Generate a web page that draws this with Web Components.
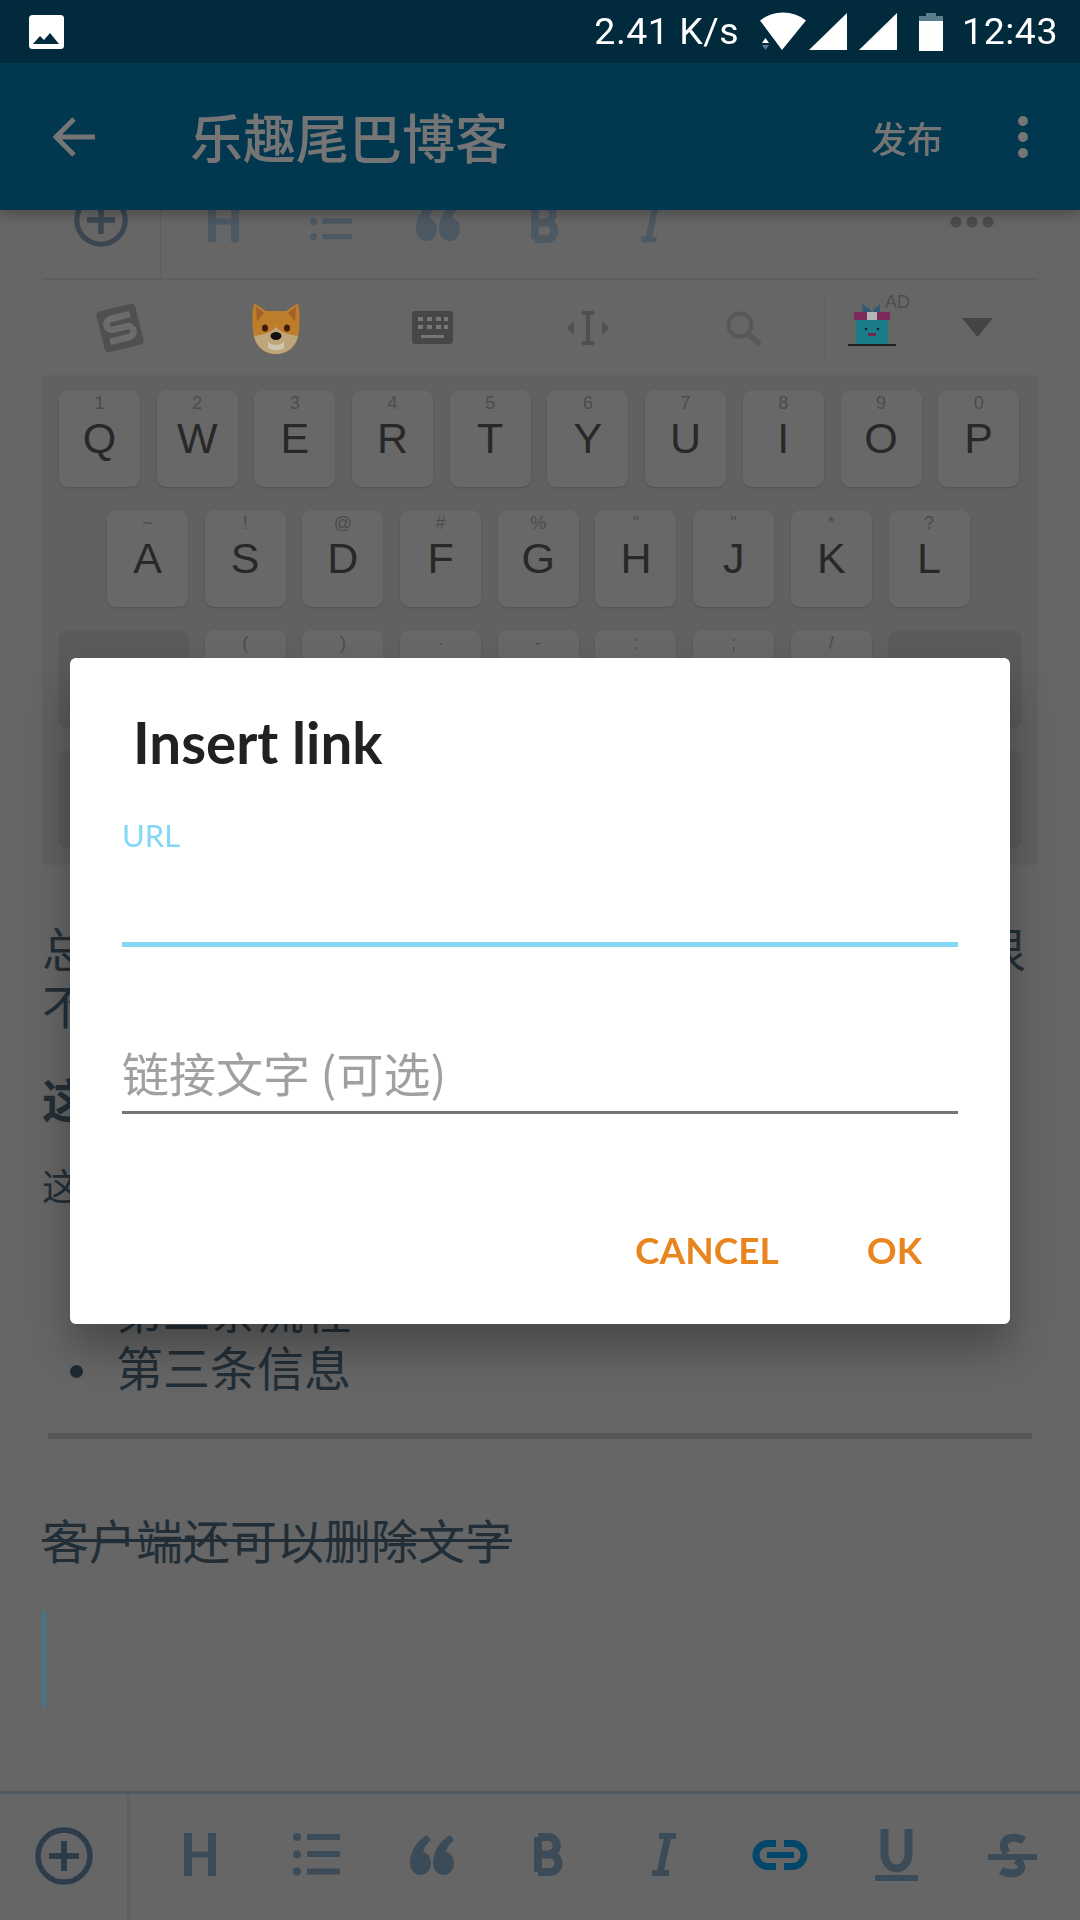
<!DOCTYPE html>
<html lang="zh">
<head>
<meta charset="utf-8">
<title>Insert link</title>
<style>
html,body{margin:0;padding:0;}
body{width:1080px;height:1920px;overflow:hidden;background:#666;font-family:"Noto Sans CJK SC","Noto Sans",sans-serif;}
</style>
</head>
<body>
<blog-screen>
  <status-bar></status-bar>
  <app-bar title-text="乐趣尾巴博客" action="发布"></app-bar>
  <keyboard-shot></keyboard-shot>
  <post-body></post-body>
  <format-bar></format-bar>
  <link-dialog></link-dialog>
</blog-screen>

<script>
// every toolbar / status icon lives here, keyed by name
const ICONS = {
    plus: `<svg viewBox="0 0 58 58"><circle cx="29" cy="29" r="26" fill="none" stroke="currentColor" stroke-width="5.5"/><path d="M14 29H44M29 14V44" stroke="currentColor" stroke-width="6"/></svg>`,
    h: `<svg viewBox="0 0 32 43"><path d="M0 0h8v18.500h16V0h8v43h-8V24.500H8V43H0z" fill="currentColor"/></svg>`,
    list: `<svg viewBox="0 0 47 43"><circle cx="4" cy="4" r="4" fill="currentColor"/><circle cx="4" cy="21.500" r="4" fill="currentColor"/><circle cx="4" cy="38.500" r="4" fill="currentColor"/><path d="M14 1h33v6H14zM14 18h33v6H14zM14 35.500h33v6H14z" fill="currentColor"/></svg>`,
    quote: `<svg viewBox="0 0 44 40"><path d="M17 0L21 5C16 9 14 13 13 17C18 18 21 23 21 28A10.500 12 0 0 1 0 28C0 16 7 6 17 0Z" fill="currentColor"/><path d="M40 0L44 5C39 9 37 13 36 17C41 18 44 23 44 28A10.500 12 0 0 1 23 28C23 16 30 6 40 0Z" fill="currentColor"/></svg>`,
    b: `<svg viewBox="0 0 29 43"><path d="M4 4H14a8.500 8.500 0 0 1 0 17.500H4M14 21.500h2a8.500 8.750 0 0 1 0 17.500H4M4 4V39" fill="none" stroke="currentColor" stroke-width="8"/></svg>`,
    i: `<svg viewBox="0 0 24 43"><path d="M7 3H24M0 40H17" fill="none" stroke="currentColor" stroke-width="6"/><path d="M12.500 3L4.500 40H11.500L19.500 3Z" fill="currentColor"/></svg>`,
    link: `<svg viewBox="0 0 52 30"><path d="M22 3.500H13.500a11.500 11.500 0 0 0 0 23H22M30 3.500h8.500a11.500 11.500 0 0 1 0 23H30" fill="none" stroke="currentColor" stroke-width="7"/><path d="M13 12h27v6H13z" fill="currentColor"/></svg>`,
    u: `<svg viewBox="0 0 43 52"><path d="M9.500 0V25a12 14.500 0 0 0 24 0V0" fill="none" stroke="currentColor" stroke-width="8"/><path d="M0 46h43v6H0z" fill="currentColor"/></svg>`,
    s: `<svg viewBox="0 0 49 42"><path d="M36 6.500C28 2 17 3 16 10C15.500 14 16 16 19 19M28 26C33 29 34 31 33 35C31 40 21 41 13 36.500" fill="none" stroke="currentColor" stroke-width="8"/><path d="M0 20h49v6H0z" fill="currentColor"/></svg>`,
    dots: `<svg viewBox="0 0 44 12"><circle cx="6" cy="6" r="5.500" fill="currentColor"/><circle cx="22" cy="6" r="5.500" fill="currentColor"/><circle cx="38" cy="6" r="5.500" fill="currentColor"/></svg>`,
    back: `<svg viewBox="0 0 42 40"><path d="M42 20H4M21 2L3 20L21 38" fill="none" stroke="currentColor" stroke-width="5"/></svg>`,
    more: `<svg viewBox="0 0 10 42"><circle cx="5" cy="5" r="5" fill="currentColor"/><circle cx="5" cy="21" r="5" fill="currentColor"/><circle cx="5" cy="37" r="5" fill="currentColor"/></svg>`,
    picture: `<svg viewBox="0 0 35 34"><rect width="35" height="34" rx="3.500" fill="#fff"/><path d="M4 29L11 21L15 25L21 18L30 29Z" fill="#012a3d"/></svg>`,
    wifi: `<svg viewBox="0 0 48 38"><path d="M1 7.500A37 37 0 0 1 47 7.500L23 37Z" fill="#fff"/><path d="M3 30H10L6.500 25Z" fill="#fff"/><path d="M3 32H10L6.500 37Z" fill="#5b7c8c"/></svg>`,
    signal: `<svg viewBox="0 0 38 37"><path d="M0 37H38V0Z" fill="#fff"/></svg>`,
    battery: `<svg viewBox="0 0 24 38"><path d="M7 0H17V3H24V8H0V3H7Z" fill="#5b7c8c"/><path d="M0 8H24V38H0Z" fill="#fff"/></svg>`,
    sogou: `<svg viewBox="0 0 52 52"><g transform="rotate(-14 26 26)"><rect x="6" y="5" width="40" height="42" rx="4" fill="#4f4f4f"/><path d="M39 15H19a5.500 5.500 0 0 0 0 11h14a5.500 5.500 0 0 1 0 11H13" fill="none" stroke="#6c6c6c" stroke-width="6.500"/></g></svg>`,
    dog: `<svg viewBox="0 0 48 52"><path d="M2 1L14 9H34L46 1C48 10 48 20 47 27C47 42 36 52 24 52C12 52 1 42 1 27C0 20 0 10 2 1Z" fill="#bd7d2a"/><path d="M4 5L12 11L5 19ZM44 5L36 11L43 19Z" fill="#a0602a"/><path d="M24 25C30 32 41 33 46 34C44 45 35 52 24 52C13 52 4 45 2 34C7 33 18 32 24 25Z" fill="#bfa67a"/><ellipse cx="13" cy="26" rx="3" ry="3.500" fill="#3f1a08"/><ellipse cx="35" cy="26" rx="3" ry="3.500" fill="#3f1a08"/><ellipse cx="24" cy="34" rx="5.500" ry="4" fill="#141110"/><path d="M16 40C20 44 28 44 32 40V46C28 49 20 49 16 46Z" fill="#cfc5ad"/></svg>`,
    keys: `<svg viewBox="0 0 41 33"><rect width="41" height="33" rx="3" fill="#474747"/><path d="M6 6h5v4H6zM15 6h5v4h-5zM24 6h5v4h-5zM32 6h4v4h-4zM6 14h5v4H6zM15 14h5v4h-5zM24 14h5v4h-5zM32 14h4v4h-4zM9 24h23v3H9z" fill="#777"/></svg>`,
    cursor: `<svg viewBox="0 0 42 34"><path d="M15 2h12M15 32h12M21 2V32" fill="none" stroke="#505050" stroke-width="4"/><path d="M0 17L7 10V24ZM42 17L35 10V24Z" fill="#505050"/></svg>`,
    search: `<svg viewBox="0 0 37 34"><circle cx="14" cy="14" r="11.500" fill="none" stroke="#575757" stroke-width="4"/><path d="M22 23L34 33" stroke="#575757" stroke-width="5"/></svg>`,
    gift: `<svg viewBox="0 0 48 46"><path d="M14 4L23 10V13H15ZM32 4L25 10V13H32Z" fill="#2f5a72"/><rect x="8" y="20" width="32" height="24" fill="#1b7d8a"/><rect x="6" y="12" width="36" height="8" fill="#7c2c5a"/><rect x="19" y="12" width="10" height="8" fill="#b5b5b5"/><circle cx="18" cy="29" r="1.300" fill="#123"/><circle cx="30" cy="29" r="1.300" fill="#123"/><path d="M20 33h8v3h-8z" fill="#6d2c4c"/><path d="M0 44h48v2H0z" fill="#222"/></svg>`,
    triangle: `<svg viewBox="0 0 31 19"><path d="M0 0H31L15.500 19Z" fill="#444"/></svg>`,
};

class UiIcon extends HTMLElement {
    constructor() {
        super();
        const shadowRoot = this.attachShadow({ mode: 'open' });
        const w = this.getAttribute('w') || 24;
        const h = this.getAttribute('h') || 24;
        shadowRoot.innerHTML = `
        <style>
        :host{ display:block; flex:none; width:${w}px; height:${h}px; }
        svg{ display:block; width:100%; height:100%; overflow:visible; }
        </style>
        ${ICONS[this.getAttribute('name')] || ''}
        `;
    }
}
customElements.define('ui-icon', UiIcon);

class BlogScreen extends HTMLElement {
    constructor() {
        super();
        this.attachShadow({ mode: 'open' }).innerHTML = `
        <style>
        :host{ display:flex; flex-direction:column; position:relative; width:1080px; height:1920px; overflow:hidden; background:#666; }
        </style>
        <slot></slot>
        `;
    }
}
customElements.define('blog-screen', BlogScreen);

class StatusBar extends HTMLElement {
    constructor() {
        super();
        this.attachShadow({ mode: 'open' }).innerHTML = `
        <style>
        :host{ display:flex; flex:none; align-items:center; height:63px; padding:0 22px 0 29px; background:#012a3d; color:#fff;
               font:37.5px/63px Roboto,sans-serif; position:relative; z-index:3; }
        .speed{ margin-left:auto; letter-spacing:.5px; }
        .time{ margin-left:19px; letter-spacing:.5px; }
        </style>
        <ui-icon name="picture" w="35" h="34"></ui-icon>
        <span class="speed">2.41 K/s</span>
        <ui-icon name="wifi" w="48" h="38" style="margin-left:20px"></ui-icon>
        <ui-icon name="signal" w="38" h="37" style="margin-left:2px"></ui-icon>
        <ui-icon name="signal" w="38" h="37" style="margin-left:12px"></ui-icon>
        <ui-icon name="battery" w="24" h="38" style="margin-left:22px"></ui-icon>
        <span class="time">12:43</span>
        `;
    }
}
customElements.define('status-bar', StatusBar);

class AppBar extends HTMLElement {
    constructor() {
        super();
        this.attachShadow({ mode: 'open' }).innerHTML = `
        <style>
        :host{ display:flex; flex:none; align-items:center; height:147px; padding:0 52px 0 53px; background:#01374f; color:#757575;
               position:relative; z-index:2; box-shadow:0 4px 12px rgba(0,0,0,.28); }
        .title{ margin-left:95px; font:500 53px/1 "Noto Sans CJK SC",sans-serif; }
        .action{ margin-left:auto; font:500 36px/1 "Noto Sans CJK SC",sans-serif; }
        </style>
        <ui-icon name="back" w="42" h="40"></ui-icon>
        <span class="title">${this.getAttribute('title-text')}</span>
        <span class="action">${this.getAttribute('action')}</span>
        <ui-icon name="more" w="10" h="42" style="margin-left:75px"></ui-icon>
        `;
    }
}
customElements.define('app-bar', AppBar);

class SoftKey extends HTMLElement {
    constructor() {
        super();
        const hint = this.getAttribute('hint') || '';
        this.attachShadow({ mode: 'open' }).innerHTML = `
        <style>
        :host{ display:block; flex:none; box-sizing:border-box; width:81px; height:97px; border-radius:9px; background:#686868;
               box-shadow:0 1px 2px rgba(0,0,0,.16); text-align:center; color:#282828; font-family:"Liberation Sans",sans-serif; overflow:hidden; }
        :host([wide]){ width:130px; background:#5b5b5b; }
        .hint{ display:block; height:18px; padding-top:3.5px; font-size:18px; line-height:18px; color:#4c4c4c; }
        .main{ display:block; font-size:43px; line-height:43px; margin-top:5px; }
        </style>
        <span class="hint">${hint}</span>
        <span class="main"><slot></slot></span>
        `;
    }
}
customElements.define('soft-key', SoftKey);

class KeyboardShot extends HTMLElement {
    constructor() {
        super();
        const row = (letters, hints) => letters.map((l, i) => `<soft-key hint="${hints[i]}">${l}</soft-key>`).join('');
        this.attachShadow({ mode: 'open' }).innerHTML = `
        <style>
        :host{ display:block; flex:none; box-sizing:border-box; width:996px; margin-left:42px; height:655px; overflow:hidden; filter:blur(.7px); }
        .tools{ display:flex; align-items:flex-end; box-sizing:border-box; height:70px; padding-bottom:35px; border-bottom:2px solid #5e5e5e; color:#4c5862; position:relative; }
        .tools .add{ width:118px; flex:none; display:flex; justify-content:center; margin-bottom:-4px; color:#3a4752; }
        .tools .cell{ width:107px; flex:none; display:flex; justify-content:center; align-items:flex-end; }
        .tools .sep{ position:absolute; left:118px; top:0; bottom:0; width:1px; background:#5d5d5d; }
        .tools .cells{ display:flex; padding-left:10px; }
        .tools .more{ margin-left:auto; margin-right:44px; margin-bottom:15px; color:#4c4c4c; }
        .cands{ display:flex; align-items:center; height:95px; }
        .cands .cell{ width:156px; flex:none; display:flex; justify-content:center; }
        .cands .sep{ width:1px; height:66px; background:#606060; margin-left:2px; }
        .gift{ position:relative; margin:0 0 9px 23px; }
        .gift span{ position:absolute; left:37px; top:-7px; font:18px/18px "Liberation Sans",sans-serif; color:#4e4e4e; }
        .keys{ background:#616161; height:490px; box-sizing:border-box; padding:15px 17px 0; display:flex; flex-direction:column; gap:23px; }
        .row{ display:flex; gap:16.7px; }
        .row.mid{ padding-left:48px; }
        .row.shifted soft-key[wide]:first-child{ width:129px; }
        .row.shifted soft-key[wide]:last-child{ width:132px; }
        .row.split{ justify-content:space-between; }
        </style>
        <div class="tools">
            <div class="add"><ui-icon name="plus" w="54" h="54"></ui-icon></div>
            <div class="sep"></div>
            <div class="cells">
                <div class="cell"><ui-icon name="h" w="31" h="43"></ui-icon></div>
                <div class="cell"><ui-icon name="list" w="42" h="43"></ui-icon></div>
                <div class="cell"><ui-icon name="quote" w="44" h="40" style="margin-bottom:2px"></ui-icon></div>
                <div class="cell"><ui-icon name="b" w="28" h="41"></ui-icon></div>
                <div class="cell"><ui-icon name="i" w="22" h="41"></ui-icon></div>
            </div>
            <ui-icon class="more" name="dots" w="44" h="12"></ui-icon>
        </div>
        <div class="cands">
            <div class="cell"><ui-icon name="sogou" w="52" h="52"></ui-icon></div>
            <div class="cell"><ui-icon name="dog" w="48" h="52"></ui-icon></div>
            <div class="cell"><ui-icon name="keys" w="41" h="33"></ui-icon></div>
            <div class="cell"><ui-icon name="cursor" w="42" h="34"></ui-icon></div>
            <div class="cell"><ui-icon name="search" w="37" h="34"></ui-icon></div>
            <div class="sep"></div>
            <div class="gift"><ui-icon name="gift" w="48" h="46"></ui-icon><span>AD</span></div>
            <ui-icon name="triangle" w="31" h="19" style="margin-left:66px"></ui-icon>
        </div>
        <div class="keys">
            <div class="row">${row('QWERTYUIOP'.split(''), '1234567890'.split(''))}</div>
            <div class="row mid">${row('ASDFGHJKL'.split(''), ['~', '!', '@', '#', '%', '&quot;', '&quot;', '*', '?'])}</div>
            <div class="row shifted">
                <soft-key wide></soft-key>
                ${row(['', '', '', '', '', '', ''], ['(', ')', '·', '-', ':', ';', '/'])}
                <soft-key wide></soft-key>
            </div>
            <div class="row split"><soft-key wide></soft-key><soft-key wide></soft-key></div>
        </div>
        `;
    }
}
customElements.define('keyboard-shot', KeyboardShot);

class PostBody extends HTMLElement {
    constructor() {
        super();
        this.attachShadow({ mode: 'open' }).innerHTML = `
        <style>
        :host{ display:block; flex:1; box-sizing:border-box; padding:0 42px; color:#222e37; font-size:47px; line-height:57px; font-weight:400; }
        .split{ display:flex; justify-content:space-between; margin-top:53px; padding-right:12px; }
        .strong{ font-weight:700; margin-top:37px; height:57px; }
        .small{ font-size:37px; line-height:50px; height:50px; margin-top:34px; }
        ul{ list-style:none; margin:13px 0 0; padding:0; }
        li{ position:relative; height:57px; padding-left:74px; }
        li::before{ content:''; position:absolute; left:28px; top:28px; width:13px; height:13px; border-radius:50%; background:#1e2b34; }
        hr{ border:0; height:6px; background:#555; margin:39px 6px 0; }
        .strike{ margin-top:71px; text-decoration:line-through; text-decoration-thickness:3px; }
        .caret{ width:4px; height:97px; background:#477585; margin-top:44px; }
        </style>
        <div class="split"><span>总</span><span>很</span></div>
        <div>不</div>
        <div class="strong">这</div>
        <div class="small">这</div>
        <ul><li></li><li>第二条流程</li><li>第三条信息</li></ul>
        <hr>
        <div class="strike">客户端还可以删除文字</div>
        <div class="caret"></div>
        `;
    }
}
customElements.define('post-body', PostBody);

class FormatBar extends HTMLElement {
    constructor() {
        super();
        const cell = (name, w, h, extra) => `<div class="cell" ${extra || ''}><ui-icon name="${name}" w="${w}" h="${h}"></ui-icon></div>`;
        this.attachShadow({ mode: 'open' }).innerHTML = `
        <style>
        :host{ display:flex; flex:none; height:129px; box-sizing:border-box; border-top:3px solid #4f5a63; color:#3c4b58; }
        .add{ width:127px; flex:none; border-right:3px solid #5a6066; display:flex; justify-content:center; align-items:center; color:#2c3c4a; padding-bottom:3px; box-sizing:content-box; }
        .cells{ flex:1; display:grid; grid-template-columns:repeat(8,116px); padding-left:12px; align-items:center; padding-bottom:5px; }
        .cell{ display:flex; justify-content:center; }
        </style>
        <div class="add"><ui-icon name="plus" w="58" h="58"></ui-icon></div>
        <div class="cells">
            ${cell('h', 32, 43)}
            ${cell('list', 47, 43)}
            ${cell('quote', 44, 40)}
            ${cell('b', 29, 43)}
            ${cell('i', 24, 43)}
            ${cell('link', 52, 30, 'style="color:#02466a"')}
            ${cell('u', 43, 52)}
            ${cell('s', 49, 42)}
        </div>
        `;
    }
}
customElements.define('format-bar', FormatBar);

class LinkField extends HTMLElement {
    constructor() {
        super();
        this.attachShadow({ mode: 'open' }).innerHTML = `
        <style>
        :host{ display:block; margin:0 52px; }
        .label{ font:400 31px/36px Lato,sans-serif; color:#82d8f5; }
        .line{ background:#82d8f5; height:5px; margin-top:89px; }
        .hint{ font:400 47px/60px "Noto Sans CJK SC",sans-serif; color:#a0a0a0; }
        :host([placeholder]) .line{ background:#757575; height:3px; margin-top:9px; }
        </style>
        ${this.hasAttribute('placeholder')
            ? `<div class="hint">${this.getAttribute('placeholder')}</div>`
            : `<div class="label">${this.getAttribute('label')}</div>`}
        <div class="line"></div>
        `;
    }
}
customElements.define('link-field', LinkField);

class LinkDialog extends HTMLElement {
    constructor() {
        super();
        this.attachShadow({ mode: 'open' }).innerHTML = `
        <style>
        :host{ display:block; position:absolute; left:70px; top:658px; width:940px; height:666px; background:#fff; border-radius:6px;
               box-shadow:0 24px 44px rgba(0,0,0,.3); z-index:4; color:#212121; }
        h2{ margin:0; padding:51px 0 0 63px; font:700 56.5px/66px Lato,sans-serif; }
        link-field{ margin-top:42px; }
        link-field + link-field{ margin-top:95px; }
        .actions{ display:flex; justify-content:flex-end; gap:88px; margin:114px 88px 0 0; font:700 37px/44px Lato,sans-serif; color:#e8851f; }
        </style>
        <h2>Insert link</h2>
        <link-field label="URL"></link-field>
        <link-field placeholder="链接文字 (可选)"></link-field>
        <div class="actions"><span>CANCEL</span><span>OK</span></div>
        `;
    }
}
customElements.define('link-dialog', LinkDialog);
</script>
</body>
</html>
